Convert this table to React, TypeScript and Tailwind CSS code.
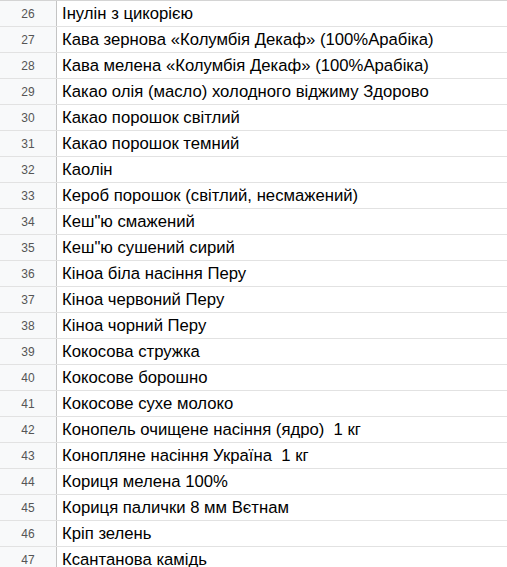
const rows: [number, string][] = [
  [26, 'Інулін з цикорією'],
  [27, 'Кава зернова «Колумбія Декаф» (100%Арабіка)'],
  [28, 'Кава мелена «Колумбія Декаф» (100%Арабіка)'],
  [29, 'Какао олія (масло) холодного віджиму Здорово'],
  [30, 'Какао порошок світлий'],
  [31, 'Какао порошок темний'],
  [32, 'Каолін'],
  [33, 'Кероб порошок (світлий, несмажений)'],
  [34, 'Кеш"ю смажений'],
  [35, 'Кеш"ю сушений сирий'],
  [36, 'Кіноа біла насіння Перу'],
  [37, 'Кіноа червоний Перу'],
  [38, 'Кіноа чорний Перу'],
  [39, 'Кокосова стружка'],
  [40, 'Кокосове борошно'],
  [41, 'Кокосове сухе молоко'],
  [42, 'Конопель очищене насіння (ядро)  1 кг'],
  [43, 'Конопляне насіння Україна  1 кг'],
  [44, 'Кориця мелена 100%'],
  [45, 'Кориця палички 8 мм Вєтнам'],
  [46, 'Кріп зелень'],
  [47, 'Ксантанова камідь'],
]

export default function App() {
  return (
    <div className="h-[567px] w-[507px] overflow-hidden bg-white font-['Liberation_Sans',Arial,sans-serif]">
      <div className="border-t border-[#d4d4d4]">
        {rows.map(([n, name]) => (
          <div key={n} className="flex h-[26px] border-b border-[#e2e2e2]">
            <div className="flex w-[57px] shrink-0 items-center justify-center border-r border-[#c4c4c4] bg-[#f8f9fa] text-[12px] text-[#555]">
              {n}
            </div>
            <div className="flex items-center whitespace-pre pl-[5px] text-[16.7px] text-black">
              {name}
            </div>
          </div>
        ))}
      </div>
    </div>
  )
}
